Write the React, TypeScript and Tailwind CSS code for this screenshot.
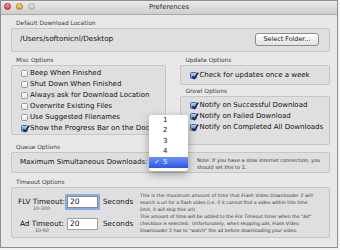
import type { ReactNode } from "react";
import clsx from "clsx";

function CheckBox({ checked }: { checked?: boolean }) {
  return (
    <span
      className={clsx(
        "relative flex h-[7px] w-[7px] shrink-0 items-center justify-center rounded-[1.5px] border",
        checked
          ? "border-[#3f63a3] bg-gradient-to-b from-[#b7d1f5] to-[#4f86db]"
          : "border-[#9c9c9c] bg-gradient-to-b from-white to-[#e6e6e6]"
      )}
    >
      {checked && (
        <svg viewBox="0 0 8 8" className="absolute -top-[1px] left-0 h-[8px] w-[8px]">
          <path d="M1.4 4.2 L3.2 6.4 L7.2 0.6" stroke="#15254d" strokeWidth="1.5" fill="none" />
        </svg>
      )}
    </span>
  );
}

function Check({ label, checked }: { label: string; checked?: boolean }) {
  return (
    <div className="flex h-[11px] items-center gap-[2px] whitespace-nowrap text-[7px] leading-none">
      <CheckBox checked={checked} />
      <span>{label}</span>
    </div>
  );
}

function Group({
  label,
  labelH,
  boxClass,
  children,
}: {
  label: string;
  labelH: string;
  boxClass: string;
  children: ReactNode;
}) {
  return (
    <div className="flex flex-col">
      <div className={clsx("flex items-end pb-[1px] pl-[5px]", labelH)}>
        <span className="whitespace-nowrap text-[5.9px] leading-[8px] text-[#3d3d3d]">{label}</span>
      </div>
      <div className={clsx("rounded-[2px] border border-[#c6c6c6] bg-[#dfdfdf]", boxClass)}>{children}</div>
    </div>
  );
}

const misc: [string, boolean][] = [
  ["Beep When Finished", false],
  ["Shut Down When Finished", false],
  ["Always ask for Download Location", false],
  ["Overwrite Existing Files", false],
  ["Use Suggested Filenames", false],
  ["Show the Progress Bar on the Dock", true],
];

const growl = ["Notify on Successful Download", "Notify on Failed Download", "Notify on Completed All Downloads"];

export default function App() {
  return (
    <div className="h-[250px] w-[340px] overflow-hidden bg-[#f3f3f3] font-['DejaVu_Sans',sans-serif] text-[#111]">
      <div className="relative flex h-[248px] w-[338px] flex-col border border-[#8f8f8f] bg-[#e8e8e8]">
        {/* title bar */}
        <div className="grid h-[14px] shrink-0 grid-cols-[1fr_auto_1fr] border-b border-[#aaaaaa] bg-gradient-to-b from-[#ebebeb] to-[#cecece]">
          <div className="flex items-start gap-[5px] pl-[3px] pt-[2px]">
            <span className="h-[7px] w-[7px] rounded-full border border-[#a8312c] bg-gradient-to-b from-[#f8a09a] to-[#dc3c34]" />
            <span className="h-[7px] w-[7px] rounded-full border border-[#b07a14] bg-gradient-to-b from-[#fbe08c] to-[#e0a024]" />
            <span className="h-[7px] w-[7px] rounded-full border border-[#a6a6a6] bg-gradient-to-b from-[#e6e6e6] to-[#c4c4c4]" />
          </div>
          <div className="flex items-center pb-[1px] text-[6.8px] text-[#2a2a2a]">Preferences</div>
          <div />
        </div>

        <div className="flex flex-col pl-[10px] pr-[7px]">
          <Group label="Default Download Location" labelH="h-[13px]" boxClass="flex h-[24px] items-center justify-between pl-[8px] pr-[10px]">
            <span className="pb-[1px] text-[7.3px]">/Users/softonicnl/Desktop</span>
            <button className="mb-[2px] h-[13px] w-[64px] rounded-[3px] border border-[#8c8c8c] bg-gradient-to-b from-white to-[#e2e2e2] text-[6.4px] leading-none text-[#151515]">
              Select Folder...
            </button>
          </Group>

          <div className="flex gap-[14px]">
            <div className="w-[156px]">
              <Group label="Misc Options" labelH="h-[13px]" boxClass="h-[70px] pl-[9px] pt-[2px]">
                {misc.map(([l, c]) => (
                  <Check key={l} label={l} checked={c} />
                ))}
              </Group>
            </div>
            <div className="flex w-[150px] flex-col">
              <Group label="Update Options" labelH="h-[13px]" boxClass="flex h-[20px] items-center pl-[9px]">
                <Check label="Check for updates once a week" checked />
              </Group>
              <Group label="Growl Options" labelH="h-[11px]" boxClass="h-[49px] pl-[9px] pt-[3px]">
                {growl.map((l) => (
                  <Check key={l} label={l} checked />
                ))}
              </Group>
            </div>
          </div>

          <Group label="Queue Options" labelH="h-[7px]" boxClass="flex h-[21px] items-center pl-[8px]">
            <span className="w-[177px] shrink-0 whitespace-nowrap text-[7px]">Maximum Simultaneous Downloads:</span>
            <span className="whitespace-nowrap pt-[3px] text-[5px] leading-[7px] text-[#333]">
              Note: If you have a slow internet connection, you
              <br />
              should set this to 1.
            </span>
          </Group>

          <Group label="Timeout Options" labelH="h-[14px]" boxClass="h-[51px] pt-[3px]">
            <div className="flex h-[22px] items-start">
              <div className="flex w-[54px] justify-end pr-[1px]">
                <div className="mt-[6px] flex flex-col items-center">
                  <span className="whitespace-nowrap text-[7.3px] leading-[9px]">FLV Timeout:</span>
                  <span className="text-[4.8px] leading-[5px] text-[#555]">10-300</span>
                </div>
              </div>
              <div className="ml-[1px] mt-[5px] flex h-[12px] w-[31px] items-center border border-[#8a8a8a] bg-white pl-[2px] text-[7.5px] shadow-[0_0_0_2px_#86aee8]">
                20
              </div>
              <span className="ml-[5px] mt-[6px] w-[37px] text-[7.2px] leading-[9px]">Seconds</span>
              <p className="mt-[1px] whitespace-nowrap text-[4.6px] leading-[7px] text-[#333]">
                <span className="tracking-[0.1px]">This is the maximum amount of time that Flash Video Downloader 2 will</span>
                <br />
                search a url for a flash video (i.e. if it cannot find a video within this time
                <br />
                limit, it will skip this url)
              </p>
            </div>
            <div className="flex h-[22px] items-start">
              <div className="flex w-[54px] justify-end pr-[2px]">
                <div className="mt-[6px] flex flex-col items-center">
                  <span className="whitespace-nowrap text-[7.3px] leading-[9px]">Ad Timeout:</span>
                  <span className="text-[4.8px] leading-[5px] text-[#555]">10-60</span>
                </div>
              </div>
              <div className="ml-[1px] mt-[5px] flex h-[12px] w-[31px] items-center border border-[#a0a0a0] bg-white pl-[2px] text-[7.5px]">
                20
              </div>
              <span className="ml-[5px] mt-[6px] w-[37px] text-[7.2px] leading-[9px]">Seconds</span>
              <p className="whitespace-nowrap text-[4.6px] leading-[7px] text-[#333]">
                This amount of time will be added to the FLV Timeout timer when the "Ad"
                <br />
                checkbox is selected.&nbsp; Unfortunately, when skipping ads, Flash Video
                <br />
                Downloader 2 has to "watch" the ad before downloading your video.
              </p>
            </div>
          </Group>
        </div>

        {/* popup menu */}
        <div className="absolute left-[148px] top-[114px] w-[39px] rounded-[3px] bg-white pb-[3px] shadow-[0_3px_8px_rgba(0,0,0,0.35)]">
          {[1, 2, 3, 4, 5].map((n) => (
            <div
              key={n}
              className={clsx(
                "flex h-[10.5px] items-center text-[7px] leading-none",
                n === 5 && "bg-gradient-to-b from-[#6f8ff6] to-[#2a57ea] text-white"
              )}
            >
              <span className="w-[14px] pl-[5px] text-[6.5px]">{n === 5 ? "✓" : ""}</span>
              <span>{n}</span>
            </div>
          ))}
        </div>
      </div>
    </div>
  );
}
